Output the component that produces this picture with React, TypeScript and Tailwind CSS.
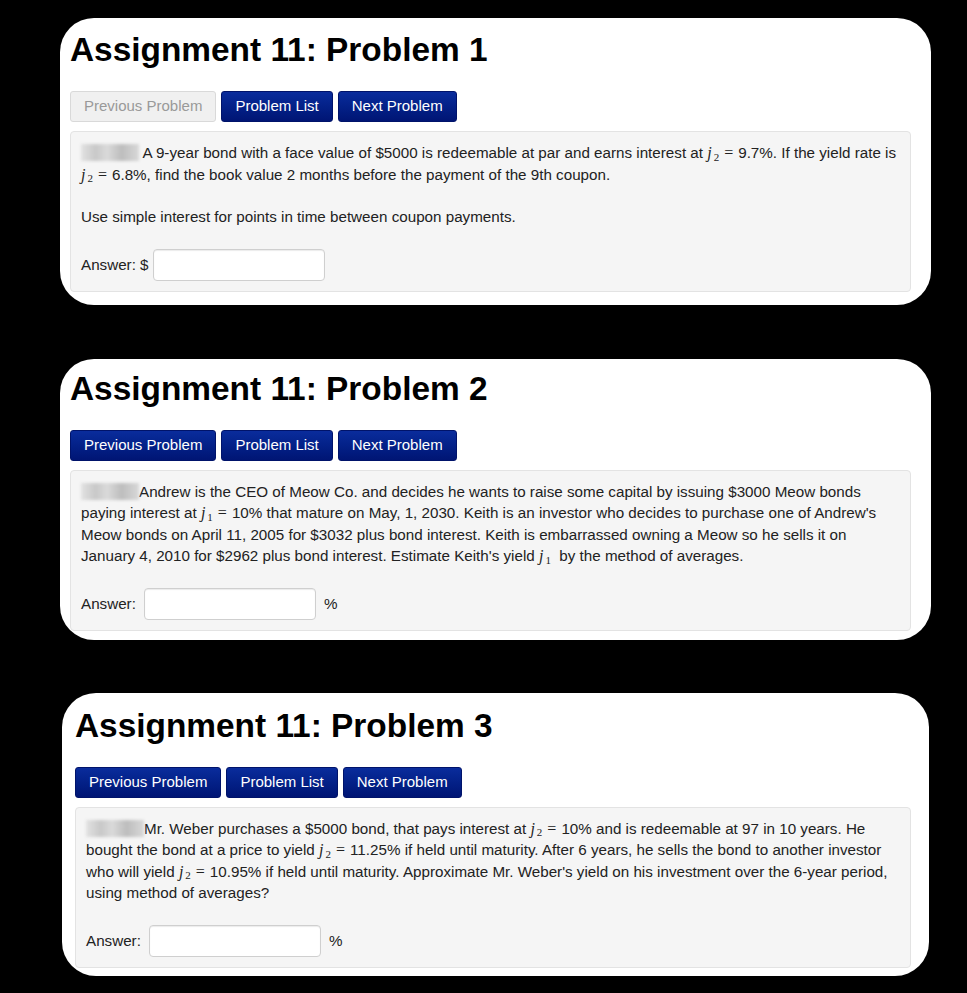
import React from "react";

// ---- small pieces ----

const Redacted = () => (
  <span className="inline-block w-[58px] h-[17px] align-[-3px] bg-[linear-gradient(90deg,#e2e2e2,#c8c8c8_25%,#dadada_45%,#bdbdbd_70%,#d8d8d8)] blur-[1.5px]" />
);

const JVar = ({ sub }: { sub: string }) => (
  <>
    <span className="font-['Liberation_Serif'] italic text-[16px] pr-[1px]">j</span>
    <sub className="font-['Liberation_Serif'] text-[11px] ml-[1px]">{sub}</sub>
  </>
);

const J = ({ sub }: { sub: string }) => (
  <span className="whitespace-nowrap">
    <JVar sub={sub} />
    <span className="font-['Liberation_Serif'] text-[16px] mx-[5px]">=</span>
  </span>
);

const NavButton = ({ label, disabled }: { label: string; disabled?: boolean }) => (
  <button
    className={
      disabled
        ? "h-[31px] px-[13px] rounded-[3px] border border-[#d9d9d9] bg-[#f0f0f0] text-[#999] text-[15px]"
        : "h-[31px] px-[13px] rounded-[3px] border border-[#00136a] bg-gradient-to-b from-[#0a2c9c] to-[#001574] text-white text-[15px]"
    }
  >
    {label}
  </button>
);

const AnswerInput = () => (
  <span className="inline-block w-[172px] h-[32px] align-middle rounded-[4px] border border-[#cfcfcf] bg-white shadow-[inset_0_1px_1px_rgba(0,0,0,0.08)]" />
);

type CardProps = {
  n: number;
  firstDisabled?: boolean;
  className: string;
  children: React.ReactNode;
};

function ProblemCard({ n, firstDisabled, className, children }: CardProps) {
  return (
    <div className={`bg-white rounded-[34px] ${className}`}>
      <h1 className="text-[33.4px] leading-[40px] font-bold text-black">
        Assignment 11: Problem {n}
      </h1>
      <div className="flex gap-[5px] mt-[21px]">
        <NavButton label="Previous Problem" disabled={firstDisabled} />
        <NavButton label="Problem List" />
        <NavButton label="Next Problem" />
      </div>
      <div className="mt-[9px] bg-[#f5f5f5] border border-[#e3e3e3] rounded-[4px] px-[10px] py-[10px] text-[15.2px] leading-[21.5px] text-[#222]">
        {children}
      </div>
    </div>
  );
}

export default function App() {
  return (
    <div className="min-h-screen bg-black pt-[18px] pb-[18px] font-['Liberation_Sans',Arial,sans-serif]">
      <ProblemCard n={1} firstDisabled className="ml-[60px] w-[871px] pt-[12px] pb-[13px] pl-[10px] pr-[20px]">
        <p>
          <Redacted /> A 9-year bond with a face value of $5000 is redeemable at par and earns interest at{" "}
          <J sub="2" />
          9.7%. If the yield rate is <J sub="2" />
          6.8%, find the book value 2 months before the payment of the 9th coupon.
        </p>
        <p className="mt-[21px]">Use simple interest for points in time between coupon payments.</p>
        <div className="mt-[21px] flex items-center gap-[4px]">
          <span>Answer: $</span>
          <AnswerInput />
        </div>
      </ProblemCard>

      <ProblemCard n={2} className="ml-[60px] mt-[54px] w-[871px] pt-[10px] pb-[9px] pl-[10px] pr-[20px]">
        <p>
          <Redacted />
          Andrew is the CEO of Meow Co. and decides he wants to raise some capital by issuing $3000 Meow bonds paying
          interest at <J sub="1" />
          10% that mature on May, 1, 2030. Keith is an investor who decides to purchase one of Andrew's Meow bonds on
          April 11, 2005 for $3032 plus bond interest. Keith is embarrassed owning a Meow so he sells it on January 4,
          2010 for $2962 plus bond interest. Estimate Keith's yield <JVar sub="1" />
          &nbsp; by the method of averages.
        </p>
        <div className="mt-[21px] flex items-center gap-[8px]">
          <span>Answer:</span>
          <AnswerInput />
          <span>%</span>
        </div>
      </ProblemCard>

      <ProblemCard n={3} className="ml-[62px] mt-[53px] w-[867px] pt-[13px] pb-[8px] pl-[13px] pr-[18px]">
        <p>
          <Redacted />
          Mr. Weber purchases a $5000 bond, that pays interest at <J sub="2" />
          10% and is redeemable at 97 in 10 years. He bought the bond at a price to yield <J sub="2" />
          11.25% if held until maturity. After 6 years, he sells the bond to another investor who will yield{" "}
          <J sub="2" />
          10.95% if held until maturity. Approximate Mr. Weber's yield on his investment over the 6-year period, using
          method of averages?
        </p>
        <div className="mt-[21px] flex items-center gap-[8px]">
          <span>Answer:</span>
          <AnswerInput />
          <span>%</span>
        </div>
      </ProblemCard>
    </div>
  );
}
